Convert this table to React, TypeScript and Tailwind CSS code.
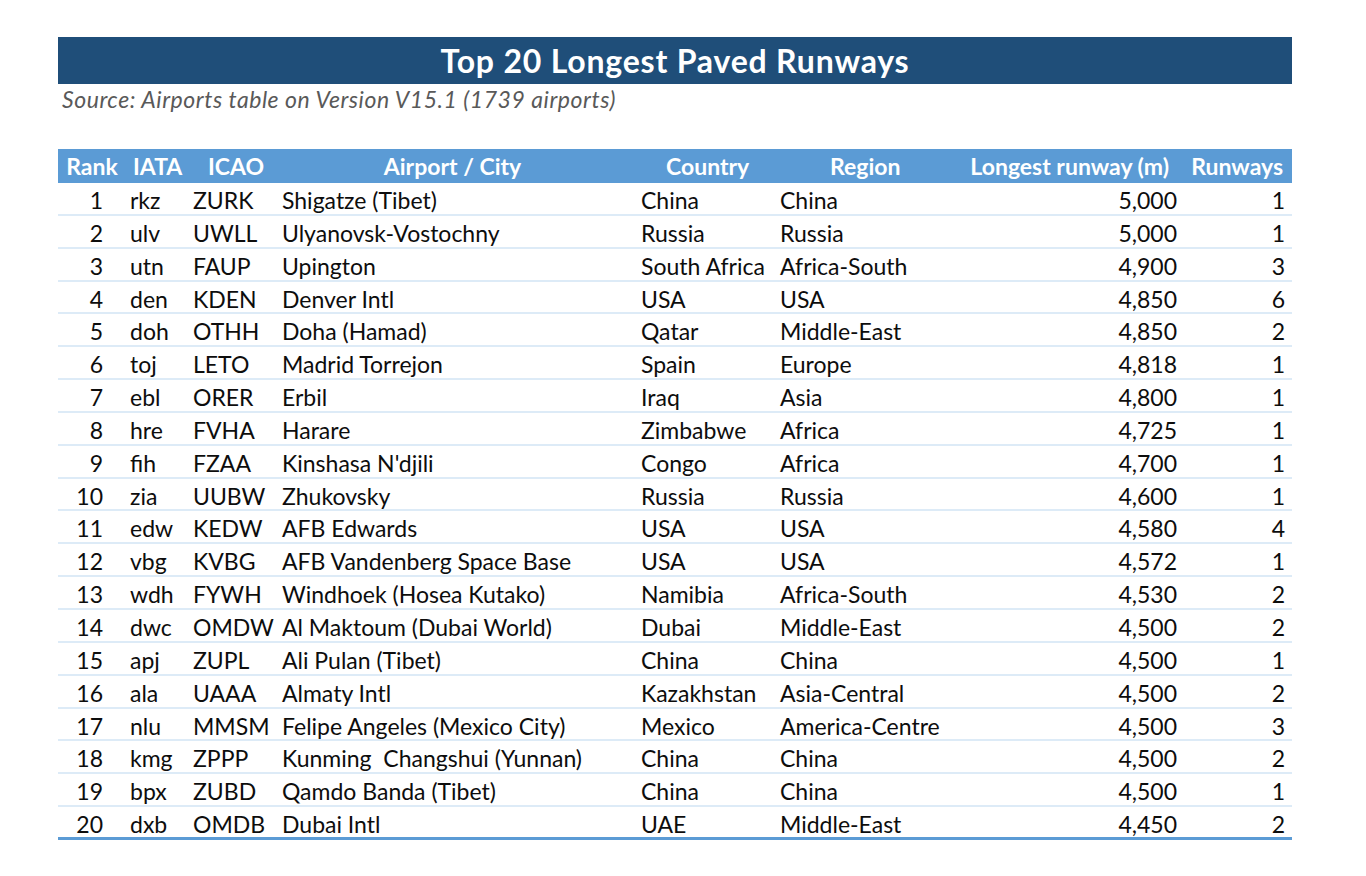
import React from "react";

type Row = [number, string, string, string, string, string, string, number];

const rows: Row[] = [
  [1, "rkz", "ZURK", "Shigatze (Tibet)", "China", "China", "5,000", 1],
  [2, "ulv", "UWLL", "Ulyanovsk-Vostochny", "Russia", "Russia", "5,000", 1],
  [3, "utn", "FAUP", "Upington", "South Africa", "Africa-South", "4,900", 3],
  [4, "den", "KDEN", "Denver Intl", "USA", "USA", "4,850", 6],
  [5, "doh", "OTHH", "Doha (Hamad)", "Qatar", "Middle-East", "4,850", 2],
  [6, "toj", "LETO", "Madrid Torrejon", "Spain", "Europe", "4,818", 1],
  [7, "ebl", "ORER", "Erbil", "Iraq", "Asia", "4,800", 1],
  [8, "hre", "FVHA", "Harare", "Zimbabwe", "Africa", "4,725", 1],
  [9, "fih", "FZAA", "Kinshasa N'djili", "Congo", "Africa", "4,700", 1],
  [10, "zia", "UUBW", "Zhukovsky", "Russia", "Russia", "4,600", 1],
  [11, "edw", "KEDW", "AFB Edwards", "USA", "USA", "4,580", 4],
  [12, "vbg", "KVBG", "AFB Vandenberg Space Base", "USA", "USA", "4,572", 1],
  [13, "wdh", "FYWH", "Windhoek (Hosea Kutako)", "Namibia", "Africa-South", "4,530", 2],
  [14, "dwc", "OMDW", "Al Maktoum (Dubai World)", "Dubai", "Middle-East", "4,500", 2],
  [15, "apj", "ZUPL", "Ali Pulan (Tibet)", "China", "China", "4,500", 1],
  [16, "ala", "UAAA", "Almaty Intl", "Kazakhstan", "Asia-Central", "4,500", 2],
  [17, "nlu", "MMSM", "Felipe Angeles (Mexico City)", "Mexico", "America-Centre", "4,500", 3],
  [18, "kmg", "ZPPP", "Kunming  Changshui (Yunnan)", "China", "China", "4,500", 2],
  [19, "bpx", "ZUBD", "Qamdo Banda (Tibet)", "China", "China", "4,500", 1],
  [20, "dxb", "OMDB", "Dubai Intl", "UAE", "Middle-East", "4,450", 2],
];

const cols = "grid grid-cols-[62px_65px_87px_361px_138px_184px_225px_112px]";

export default function App() {
  return (
    <div className="min-h-screen bg-white pl-[58px] pt-[37px] font-['Lato',sans-serif]">
      <div className="w-[1234px]">
        {/* Title */}
        <div className="flex h-[47px] items-center justify-center bg-[#1f4e79] text-[32px] font-bold tracking-[0.8px] text-white">
          Top 20 Longest Paved Runways
        </div>
        <div className="h-[65px] pl-[4px] text-[23px] italic leading-[30px] tracking-[0.55px] text-[#595959]">
          Source: Airports table on Version V15.1 (1739 airports)
        </div>

        {/* Header */}
        <div className={`${cols} h-[34px] items-center bg-[#5b9bd5] text-[23px] font-bold text-white`}>
          <div className="pl-[6px] text-center">Rank</div>
          <div className="pl-[13px] text-left">IATA</div>
          <div className="pl-[23px] text-left">ICAO</div>
          <div className="text-center">Airport / City</div>
          <div className="pl-[33px] text-left">Country</div>
          <div className="pl-[59px] text-left">Region</div>
          <div className="pr-[11px] text-right">Longest runway (m)</div>
          <div className="pr-[9px] text-right">Runways</div>
        </div>

        {/* Rows */}
        {rows.map((r, i) => (
          <div
            key={r[0]}
            className={`${cols} h-[32.85px] items-center text-[23px] text-[#0d0d0d] ${
              i === rows.length - 1 ? "border-b-[3px] border-[#5b9bd5]" : "border-b-2 border-[#ddebf7]"
            }`}
          >
            <div className="pr-[17px] text-right">{r[0]}</div>
            <div className="pl-[10px]">{r[1]}</div>
            <div className="pl-[8px]">{r[2]}</div>
            <div className="whitespace-pre pl-[10px]">{r[3]}</div>
            <div className="pl-[8px]">{r[4]}</div>
            <div className="pl-[9px]">{r[5]}</div>
            <div className="pr-[3px] text-right">{r[6]}</div>
            <div className="pr-[7px] text-right">{r[7]}</div>
          </div>
        ))}
      </div>
    </div>
  );
}
